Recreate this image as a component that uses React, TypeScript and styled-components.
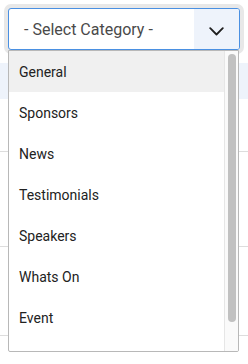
import React from "react";
import styled, { createGlobalStyle } from "styled-components";

const Global = createGlobalStyle`
  html, body { margin: 0; padding: 0; background: #ffffff; }
  body { font-family: Roboto, "Liberation Sans", Arial, sans-serif; }
`;

const Page = styled.div`
  width: 248px;
  height: 364px;
  overflow: hidden;
  position: relative;
  background: #fff;
`;

const SelectArea = styled.div`
  position: relative;
  padding: 8px 8px 0;
`;

const SelectBox = styled.div`
  height: 42px;
  box-sizing: border-box;
  border: 1px solid #4a90e2;
  border-radius: 3px;
  box-shadow: 0 0 0 4px #e8e8e8;
  display: flex;
  align-items: stretch;
  background: #fff;
  overflow: hidden;
`;

const SelectLabel = styled.div`
  flex: 1;
  display: flex;
  align-items: center;
  padding-left: 15px;
  font-size: 16px;
  color: #4a4a4a;
`;

const ArrowCell = styled.div`
  width: 45px;
  background: #eef3fb;
  display: flex;
  align-items: center;
  justify-content: center;
  padding-top: 4px;
  box-sizing: border-box;
`;

const Menu = styled.div`
  position: absolute;
  top: 50px;
  left: 8px;
  width: 231px;
  height: 302px;
  box-sizing: border-box;
  background: #fff;
  border: 1px solid #b8b8b8;
  border-radius: 0 0 2px 2px;
  display: flex;
  overflow: hidden;
  z-index: 2;
`;

const List = styled.ul`
  flex: 1;
  margin: 0;
  padding: 0;
  list-style: none;
`;

const Track = styled.div`
  width: 14px;
  box-sizing: border-box;
  background: #fafafa;
  border-left: 1px solid #e6e6e6;
  padding: 3px 2px 0 3px;
`;

const Thumb = styled.div`
  height: 268px;
  background: #c1c1c1;
  border-radius: 5px;
`;

const Item = styled.li<{ $active?: boolean }>`
  height: 41px;
  display: flex;
  align-items: center;
  padding-left: 10px;
  font-size: 14px;
  color: #222;
  background: ${(p) => (p.$active ? "#f0f0f0" : "#fff")};
`;

const Table = styled.div`
  margin-top: 13px;
  display: flex;
  flex-direction: column;
`;

const HeaderRow = styled.div`
  height: 36px;
  background: #eef3fb;
`;

const Row = styled.div<{ $h: number }>`
  height: ${(p) => p.$h}px;
  border-bottom: 1px solid #dddddd;
`;

const items = [
  "General",
  "Sponsors",
  "News",
  "Testimonials",
  "Speakers",
  "Whats On",
  "Event",
];

export default function App() {
  return (
    <Page>
      <Global />
      <SelectArea>
        <SelectBox>
          <SelectLabel>- Select Category -</SelectLabel>
          <ArrowCell>
            <svg width="15" height="9" viewBox="0 0 15 9" fill="none">
              <path d="M1.2 1.2 L7.5 7.5 L13.8 1.2" stroke="#1f1f1f" strokeWidth="1.8" strokeLinecap="round" strokeLinejoin="round" />
            </svg>
          </ArrowCell>
        </SelectBox>
        <Menu>
          <List>
            {items.map((it, i) => (
              <Item key={it} $active={i === 0}>
                {it}
              </Item>
            ))}
          </List>
          <Track>
            <Thumb />
          </Track>
        </Menu>
      </SelectArea>
      <Table>
        <HeaderRow />
        <Row $h={52} />
        <Row $h={94} />
        <Row $h={88} />
      </Table>
    </Page>
  );
}
